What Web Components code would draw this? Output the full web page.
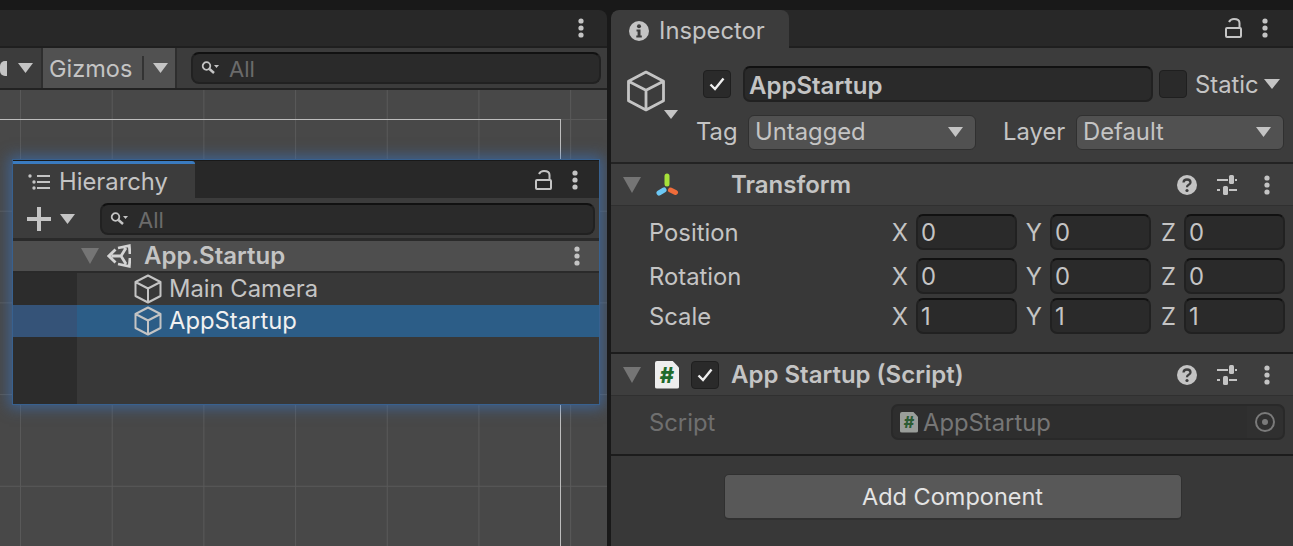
<!DOCTYPE html>
<html>
<head>
<meta charset="utf-8">
<title>Unity Editor</title>
<style>
  html, body { margin: 0; height: 100%; overflow: hidden; background: #191919; }
  body { font: 23.8px/1 Inter, "Liberation Sans", sans-serif; color: #c4c4c4; }
</style>
</head>
<body>
<editor-layout>
  <scene-panel slot="left">
    <hierarchy-window>
      <hierarchy-row>Main Camera</hierarchy-row>
      <hierarchy-row selected>AppStartup</hierarchy-row>
    </hierarchy-window>
  </scene-panel>
  <inspector-panel slot="right">
    <object-header name="AppStartup"></object-header>
    <component-header title="Transform" kind="transform"></component-header>
    <component-body style="--pad-bottom:18px">
      <vector-row label="Position" x="0" y="0" z="0" style="margin-bottom:8px"></vector-row>
      <vector-row label="Rotation" x="0" y="0" z="0" style="margin-bottom:4px"></vector-row>
      <vector-row label="Scale" x="1" y="1" z="1"></vector-row>
    </component-body>
    <component-header title="App Startup (Script)" kind="script"></component-header>
    <component-body style="--pad-bottom:14px">
      <script-row label="Script" value="AppStartup"></script-row>
    </component-body>
    <add-component></add-component>
  </inspector-panel>
</editor-layout>

<script>
// small icon set, all drawn in currentColor
const ICONS = {
  cube: `<svg viewBox="0 0 28 30" fill="none" stroke="currentColor" stroke-width="2" stroke-linejoin="round"><path d="M14 1.5 26.5 8v14L14 28.5 1.5 22V8ZM1.5 8 14 14.5 26.5 8M14 14.5v14"/></svg>`,
  tri: `<svg viewBox="0 0 16 10" preserveAspectRatio="none" fill="currentColor"><path d="M0 0h16L8 10Z"/></svg>`,
  dots: `<svg viewBox="0 0 6 20" fill="currentColor"><circle cx="3" cy="3" r="2.6"/><circle cx="3" cy="10" r="2.6"/><circle cx="3" cy="17" r="2.6"/></svg>`,
  lock: `<svg viewBox="0 0 17 20" fill="none" stroke="currentColor" stroke-width="2"><rect x="1" y="10" width="15" height="9" rx="1"/><path d="M4 4Q5.5 1 9 1q5.500 0 5.500 4v5"/></svg>`,
  search: `<svg viewBox="0 0 18 14" fill="none" stroke="currentColor"><circle cx="5.500" cy="5" r="3.800" stroke-width="1.800"/><path d="m8.500 8 4.500 4" stroke-width="2.400"/><path d="M13 4h5l-2.500 3Z" fill="currentColor" stroke="none"/></svg>`,
  list: `<svg viewBox="0 0 22 16" fill="currentColor"><circle cx="2" cy="2" r="1.700"/><circle cx="6" cy="8" r="1.700"/><circle cx="6" cy="14" r="1.700"/><rect x="9" y="1" width="13" height="2"/><rect x="9" y="7" width="13" height="2"/><rect x="9" y="13" width="13" height="2"/></svg>`,
  info: `<svg viewBox="0 0 20 20"><circle cx="10" cy="10" r="10" fill="currentColor"/><circle cx="10" cy="5.200" r="2" fill="#3c3c3c"/><path d="M7.500 8.500h4v6h1.300v2H7.300v-2h1.300v-4h-1.100Z" fill="#3c3c3c"/></svg>`,
  help: `<svg viewBox="0 0 20 20"><circle cx="10" cy="10" r="10" fill="currentColor"/><path d="M6.500 7.500Q6.700 4.500 10 4.500q3.500 0 3.500 2.800 0 1.700-1.800 2.500-1.700.8-1.700 2.400" fill="none" stroke="#3e3e3e" stroke-width="2.300"/><circle cx="10" cy="15.500" r="1.600" fill="#3e3e3e"/></svg>`,
  sliders: `<svg viewBox="0 0 20 20" fill="currentColor"><rect x="0" y="4" width="11" height="2"/><rect x="12" y="0" width="5" height="9" rx="1.500"/><rect x="18" y="4" width="2" height="2"/><rect x="0" y="14" width="3" height="2"/><rect x="6" y="11" width="5" height="9" rx="1.500"/><rect x="12" y="14" width="8" height="2"/></svg>`,
  unity: `<svg viewBox="0 0 24 24" fill="none" stroke="currentColor" stroke-width="2.800" stroke-linejoin="miter"><path d="M8.500 5.500 1.800 12l6.700 6.500M11 4 22.300 1.700 23 10M11 20 22.300 22.300 23 14M4.500 12H14L19 4M14 12l5 8"/></svg>`,
  transform: `<svg viewBox="0 0 24 24" fill="none" stroke-width="5" stroke-linecap="round"><path d="M12 3v8" stroke="#a6e13a"/><path d="M9 17l-5 3" stroke="#6cc8f5"/><path d="M15.500 17l5 2.500" stroke="#ef6c3a"/></svg>`,
  check: `<svg viewBox="0 0 16 14" fill="none" stroke="currentColor" stroke-width="2.400"><path d="M1.500 7.500 6 12 14.500 1.500"/></svg>`,
};

function iconStyle(name, w, h, extra = "") {
  return `<span class="ic" style="display:block;flex:none;width:${w}px;height:${h}px;line-height:0;${extra}">${ICONS[name].replace("<svg", '<svg width="100%" height="100%" style="display:block"')}</span>`;
}

class EditorLayout extends HTMLElement {
  constructor() {
    super();
    this.attachShadow({ mode: "open" });
    this.shadowRoot.innerHTML = `
      <style>
        :host { display: flex; gap: 4px; height: 100vh; box-sizing: border-box; padding-top: 10px; }
        ::slotted([slot="left"]) { width: 607px; flex: none; }
        ::slotted([slot="right"]) { flex: 1; min-width: 0; }
      </style>
      <slot name="left"></slot>
      <slot name="right"></slot>`;
  }
}

class ScenePanel extends HTMLElement {
  constructor() {
    super();
    this.attachShadow({ mode: "open" });
    this.shadowRoot.innerHTML = `
      <style>
        :host { display: flex; flex-direction: column; position: relative; background: #282828; border-top-right-radius: 8px; overflow: hidden; }
        .tabs { height: 36px; display: flex; justify-content: flex-end; align-items: center; padding-right: 23px; color: #c4c4c4; flex: none; }
        .toolbar { height: 40px; flex: none; display: flex; background: #3c3c3c; border-top: 2px solid #1f1f1f; border-bottom: 2px solid #222; }
        .btn { display: flex; align-items: center; height: 100%; border-right: 2px solid #2e2e2e; box-sizing: border-box; }
        .shading { width: 43px; gap: 11px; }
        .half { width: 7px; height: 15px; background: #c4c4c4; border-radius: 5px 0 0 5px; }
        .gizmos { width: 134px; background: #515151; padding-left: 6px; }
        .gizmos .t { padding-top: 2px; font-size: 23.5px; }
        .sep { width: 2px; height: 24px; background: #333; margin: 0 9px 0 10px; }
        .search { flex: 1; display: flex; padding: 4px 6px 4px 14px; }
        .scene { flex: 1; position: relative; background-color: #484848;
          background-image:
            linear-gradient(to right, #595959 1px, transparent 1px),
            linear-gradient(to bottom, #595959 1px, transparent 1px);
          background-size: 91.7px 91.7px;
          background-position: 20px 29px; }
        .frame { position: absolute; left: -4px; top: 29px; width: 565px; height: 600px; box-sizing: border-box; border: solid #bdbdbd; border-width: 1px 1px 0 0; }
      </style>
      <div class="tabs">${iconStyle("dots", 6, 20)}</div>
      <div class="toolbar">
        <div class="btn shading"><span class="half"></span>${iconStyle("tri", 15, 10)}</div>
        <div class="btn gizmos"><span class="t">Gizmos</span><span class="sep"></span>${iconStyle("tri", 15, 10)}</div>
        <div class="search"><search-field></search-field></div>
      </div>
      <div class="scene"><div class="frame"></div></div>
      <slot></slot>`;
  }
}

class SearchField extends HTMLElement {
  constructor() {
    super();
    this.attachShadow({ mode: "open" });
    this.shadowRoot.innerHTML = `
      <style>
        :host { display: flex; flex: 1; height: 32px; box-sizing: border-box; align-items: center; background: #2a2a2a; border: 2px solid #212121; border-top-color: #111; border-radius: 8px; padding-left: 8px; color: #6b6b6b; font-size: 22px; }
        .ic { color: #c4c4c4; margin-right: 10px; }
        .t { padding-top: 1px; }
      </style>
      ${iconStyle("search", 18, 14)}<span class="t">All</span>`;
  }
}

class HierarchyWindow extends HTMLElement {
  constructor() {
    super();
    this.attachShadow({ mode: "open" });
    this.shadowRoot.innerHTML = `
      <style>
        :host { position: absolute; left: 13px; top: 150px; width: 586px; height: 244px; display: flex; flex-direction: column; background: linear-gradient(to right, #2c2c2c 64px, #383838 64px); box-shadow: 0 0 0 1px #38618f, 0 0 13px 4px rgba(56,118,196,.58); }
        .tabs { height: 38px; flex: none; display: flex; box-sizing: border-box; background: #282828; border-top: 1px solid #191919; }
        .tab { width: 182px; border-top: 3px solid #3a7bc0; background: #3c3c3c; border-top-right-radius: 3px; display: flex; align-items: center; padding: 1px 0 0 15px; gap: 9px; box-sizing: border-box; }
        .tools { margin-left: auto; display: flex; align-items: center; gap: 20px; padding-right: 21px; }
        .bar { height: 43px; flex: none; box-sizing: border-box; background: #3c3c3c; display: flex; align-items: center; padding: 2px 4px 0 14px; border-bottom: 3px solid #2a2a2a; }
        .plus { width: 24px; height: 24px; flex: none; background: linear-gradient(#c4c4c4,#c4c4c4) center/24px 4px no-repeat, linear-gradient(#c4c4c4,#c4c4c4) center/4px 24px no-repeat; margin-right: 9px; }
        .bar > .ic { margin-right: 25px; }
        .scene-row { height: 32px; flex: none; box-sizing: border-box; background: #4e4e4e; border-bottom: 2px solid #2a2a2a; display: flex; align-items: center; padding: 0 19px 0 68px; }
        .scene-row b { font-size: 24px; font-weight: 600; margin-left: 13px; flex: 1; }
      </style>
      <div class="tabs">
        <div class="tab">${iconStyle("list", 22, 16)}Hierarchy</div>
        <div class="tools">${iconStyle("lock", 17, 20)}${iconStyle("dots", 6, 20)}</div>
      </div>
      <div class="bar"><span class="plus"></span>${iconStyle("tri", 15, 10)}<search-field></search-field></div>
      <div class="scene-row">${iconStyle("tri", 18, 16, "color:#757575;")}<span style="width:8px"></span>${iconStyle("unity", 24, 24, "color:#d4d4d4;")}<b>App.Startup</b>${iconStyle("dots", 6, 20)}</div>
      <slot></slot>`;
  }
}

class HierarchyRow extends HTMLElement {
  constructor() {
    super();
    this.attachShadow({ mode: "open" });
    this.shadowRoot.innerHTML = `
      <style>
        :host { display: flex; align-items: center; height: 32px; padding-left: 121px; gap: 7px; }
        :host([selected]) { background: linear-gradient(to right, #355378 64px, #2c5d87 64px); color: #f0f0f0; }
        .ic { color: #c4c4c4; }
        .t { padding-bottom: 1px; }
      </style>
      ${iconStyle("cube", 28, 30)}<span class="t"><slot></slot></span>`;
  }
}

class InspectorPanel extends HTMLElement {
  constructor() {
    super();
    this.attachShadow({ mode: "open" });
    this.shadowRoot.innerHTML = `
      <style>
        :host { display: flex; flex-direction: column; background: #282828; border-top-left-radius: 8px; overflow: hidden; }
        .tabs { height: 38px; flex: none; display: flex; box-sizing: border-box; }
        .tab { width: 178px; background: #3c3c3c; border-radius: 8px 8px 0 0; display: flex; align-items: center; gap: 10px; padding: 4px 0 0 18px; box-sizing: border-box; }
        .tools { margin-left: auto; display: flex; align-items: center; gap: 20px; padding-right: 25px; border-bottom: 2px solid #1f1f1f; flex: 1; justify-content: flex-end; }
        .content { flex: 1; display: flex; flex-direction: column; background: #383838; }
      </style>
      <div class="tabs">
        <div class="tab">${iconStyle("info", 20, 20)}Inspector</div>
        <div class="tools">${iconStyle("lock", 17, 20)}${iconStyle("dots", 6, 20)}</div>
      </div>
      <div class="content"><slot></slot></div>`;
  }
}

class ObjectHeader extends HTMLElement {
  connectedCallback() {
    this.attachShadow({ mode: "open" });
    this.shadowRoot.innerHTML = `
      <style>
        :host { display: flex; height: 114px; flex: none; box-sizing: content-box; background: #3c3c3c; border-bottom: 2px solid #232323; }
        .pic { width: 92px; flex: none; padding: 22px 0 0 15px; box-sizing: border-box; position: relative; }
        .pic .tri { position: absolute; left: 53px; top: 62px; }
        .rows { flex: 1; display: flex; flex-direction: column; padding-top: 18px; }
        .r1 { display: flex; align-items: center; height: 36px; }
        .r2 { display: flex; align-items: center; height: 35px; margin: 13px 0 0 -7px; }
        .name { width: 410px; height: 36px; box-sizing: border-box; margin: 0 6px 0 12px; padding: 3px 0 0 4px; background: #2a2a2a; border: 2px solid #212121; border-top-color: #111; border-radius: 7px; display: flex; align-items: center; font-size: 24px; font-weight: 600; }
        .static { width: 64px; flex: none; margin-left: 8px; margin-right: 5px; padding-top: 1px; }
        .lbl { flex: none; padding-bottom: 1px; }
      </style>
      <div class="pic">${iconStyle("cube", 40, 42)}<span class="tri">${iconStyle("tri", 14, 9)}</span></div>
      <div class="rows">
        <div class="r1">
          <check-box checked></check-box>
          <div class="name">${this.getAttribute("name")}</div>
          <check-box></check-box>
          <span class="static">Static</span>${iconStyle("tri", 16, 10)}
        </div>
        <div class="r2">
          <span class="lbl" style="width:52px">Tag</span>
          <drop-down value="Untagged" style="width:228px"></drop-down>
          <span class="lbl" style="margin-left:27px;width:73px">Layer</span>
          <drop-down value="Default" style="width:208px"></drop-down>
        </div>
      </div>`;
  }
}

class CheckBox extends HTMLElement {
  connectedCallback() {
    this.attachShadow({ mode: "open" });
    this.shadowRoot.innerHTML = `
      <style>
        :host { display: flex; align-items: center; justify-content: center; flex: none; width: 28px; height: 28px; box-sizing: border-box; background: #2a2a2a; border: 1.500px solid #1f1f1f; border-radius: 4px; color: #eee; }
      </style>
      ${this.hasAttribute("checked") ? iconStyle("check", 16, 14) : ""}`;
  }
}

class DropDown extends HTMLElement {
  connectedCallback() {
    this.attachShadow({ mode: "open" });
    this.shadowRoot.innerHTML = `
      <style>
        :host { display: flex; align-items: center; justify-content: space-between; flex: none; height: 35px; box-sizing: border-box; padding: 0 12px 0 6px; background: #515151; border: 1.500px solid #303030; border-radius: 6px; }
        span { padding-bottom: 1px; }
      </style>
      <span>${this.getAttribute("value")}</span>${iconStyle("tri", 15, 10)}`;
  }
}

class ComponentHeader extends HTMLElement {
  connectedCallback() {
    const kind = this.getAttribute("kind");
    const pic = kind === "transform"
      ? iconStyle("transform", 24, 24)
      : `<script-icon size="24"></script-icon><check-box checked style="margin-left:12px"></check-box>`;
    this.attachShadow({ mode: "open" });
    this.shadowRoot.innerHTML = `
      <style>
        :host { display: flex; align-items: center; flex: none; height: 41px; box-sizing: content-box; background: #3e3e3e; border-bottom: 1px solid #303030; padding-left: 12px; padding-right: 23px; }
        .bar { display: flex; align-items: center; flex: 1; }
        .left { display: flex; align-items: center; width: 108px; flex: none; }
        .title { font-size: 24px; font-weight: 600; flex: 1; padding-top: 1px; }
        .tools { display: flex; align-items: center; gap: 20px; }
        .tools .ic:last-child { margin-left: 7px; }
      </style>
      <div class="bar">
        <div class="left">${iconStyle("tri", 18, 16, "margin-right:14px;color:#757575;")}${pic}</div>
        <div class="title">${this.getAttribute("title")}</div>
        <div class="tools">${iconStyle("help", 20, 20)}${iconStyle("sliders", 20, 20)}${iconStyle("dots", 6, 20)}</div>
      </div>`;
  }
}

class ComponentBody extends HTMLElement {
  constructor() {
    super();
    this.attachShadow({ mode: "open" });
    this.shadowRoot.innerHTML = `
      <style>
        :host { display: block; flex: none; padding: 8px 8px var(--pad-bottom, 16px) 38px; border-bottom: 2px solid #1c1c1c; }
      </style>
      <slot></slot>`;
  }
}

class VectorRow extends HTMLElement {
  connectedCallback() {
    this.attachShadow({ mode: "open" });
    const cell = (axis) => `<span class="ax">${axis.toUpperCase()}</span><span class="num">${this.getAttribute(axis)}</span>`;
    this.shadowRoot.innerHTML = `
      <style>
        :host { display: flex; height: 36px; align-items: center; }
        .lbl { width: 234px; flex: none; padding-top: 1px; }
        .ax { width: 33px; padding: 1px 8px 0 0; box-sizing: border-box; text-align: right; flex: none; }
        .num { width: 101px; height: 36px; flex: none; box-sizing: border-box; padding: 1px 0 0 3px; display: flex; align-items: center; background: #2a2a2a; border: 2px solid #212121; border-top-color: #111; border-radius: 7px; }
      </style>
      <span class="lbl">${this.getAttribute("label")}</span>${cell("x")}${cell("y")}${cell("z")}`;
  }
}

class ScriptIcon extends HTMLElement {
  connectedCallback() {
    const s = +this.getAttribute("size");
    const dim = this.hasAttribute("dim");
    this.attachShadow({ mode: "open" });
    this.shadowRoot.innerHTML = `
      <style>
        :host { display: flex; flex: none; align-items: center; justify-content: center; width: ${s}px; height: ${Math.round(s * 1.15)}px; background: ${dim ? "#9a9e9a" : "#eeeeee"}; border-radius: 2px; clip-path: polygon(0 0, 72% 0, 100% 25%, 100% 100%, 0 100%); color: ${dim ? "#2c5c33" : "#1f6b2b"}; font-weight: 800; font-size: ${Math.round(s * 0.9)}px; }
      </style>
      #`;
  }
}

class ScriptRow extends HTMLElement {
  connectedCallback() {
    this.attachShadow({ mode: "open" });
    this.shadowRoot.innerHTML = `
      <style>
        :host { display: flex; height: 36px; align-items: center; color: #6f6f6f; }
        .lbl { width: 242px; flex: none; padding-top: 2px; }
        .field { flex: none; width: 394px; height: 36px; box-sizing: border-box; display: flex; align-items: center; background: #2e2e2e; border: 2px solid #292929; border-radius: 7px; padding-left: 7px; color: #767676; }
        .val { margin-left: 5px; flex: 1; padding-top: 2px; }
        .pick { width: 36px; height: 32px; display: flex; align-items: center; justify-content: center; background: #303030; border-radius: 0 6px 6px 0; }
        .ring { width: 20px; height: 20px; box-sizing: border-box; border: 2px solid #7a7a7a; border-radius: 50%; display: flex; align-items: center; justify-content: center; }
        .ring i { width: 6px; height: 6px; background: #7a7a7a; border-radius: 50%; }
      </style>
      <span class="lbl">${this.getAttribute("label")}</span>
      <div class="field"><script-icon size="18" dim></script-icon><span class="val">${this.getAttribute("value")}</span><span class="pick"><span class="ring"><i></i></span></span></div>`;
  }
}

class AddComponent extends HTMLElement {
  constructor() {
    super();
    this.attachShadow({ mode: "open" });
    this.shadowRoot.innerHTML = `
      <style>
        :host { display: flex; justify-content: center; padding: 18px 0 0 0; }
        .b { width: 458px; height: 46px; margin-left: 1px; box-sizing: border-box; display: flex; align-items: center; justify-content: center; background: #585858; border: 1px solid #303030; border-bottom-width: 2px; border-radius: 5px; color: #e4e4e4; font-size: 23.5px; }
      </style>
      <div class="b">Add Component</div>`;
  }
}

customElements.define("editor-layout", EditorLayout);
customElements.define("scene-panel", ScenePanel);
customElements.define("search-field", SearchField);
customElements.define("hierarchy-window", HierarchyWindow);
customElements.define("hierarchy-row", HierarchyRow);
customElements.define("inspector-panel", InspectorPanel);
customElements.define("object-header", ObjectHeader);
customElements.define("check-box", CheckBox);
customElements.define("drop-down", DropDown);
customElements.define("component-header", ComponentHeader);
customElements.define("component-body", ComponentBody);
customElements.define("vector-row", VectorRow);
customElements.define("script-icon", ScriptIcon);
customElements.define("script-row", ScriptRow);
customElements.define("add-component", AddComponent);
</script>
</body>
</html>
